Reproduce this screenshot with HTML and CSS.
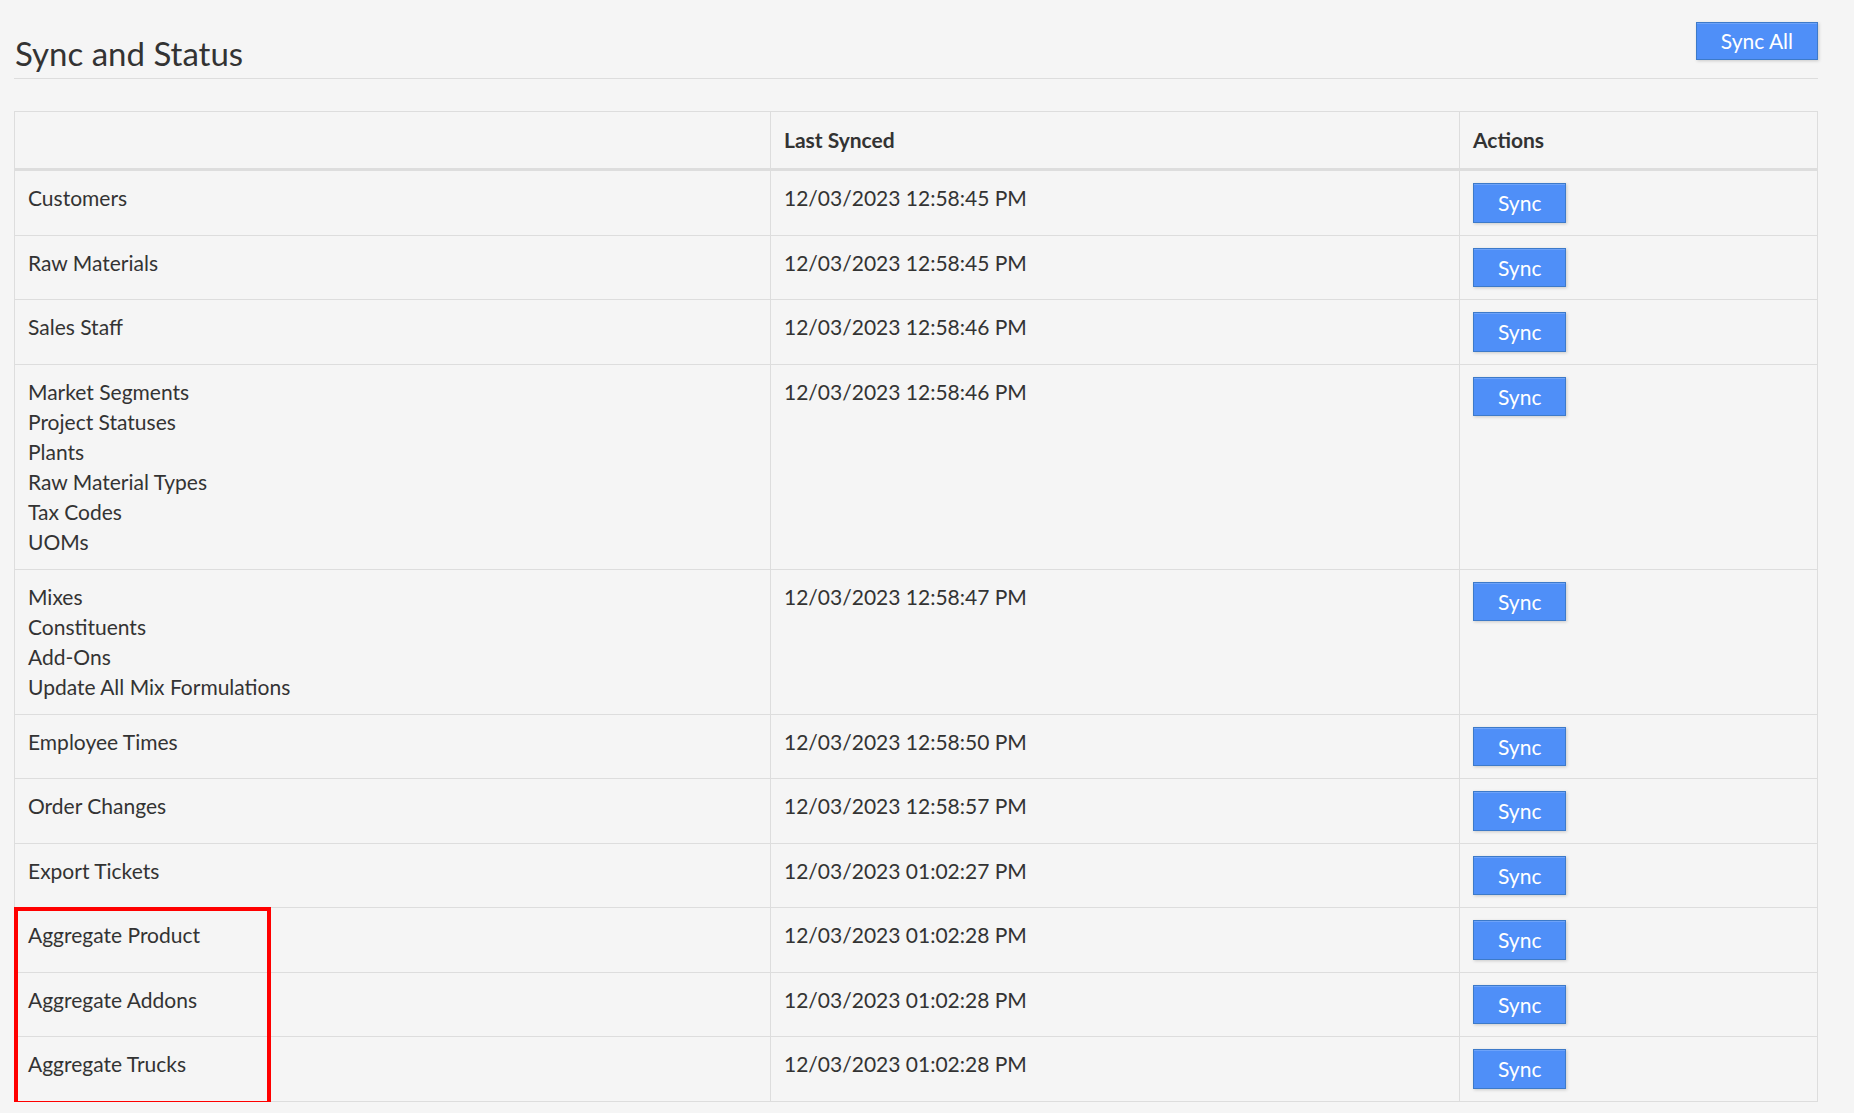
FILE: index.html
```html
<!DOCTYPE html>
<html lang="en">
<head>
<meta charset="utf-8">
<title>Sync and Status</title>
<link rel="stylesheet" href="styles.css">
</head>
<body>
<div class="page">
  <div class="page-header">
    <h1 class="title">Sync and Status</h1>
    <button class="btn">Sync All</button>
  </div>
  <div class="table-wrap">
    <table class="sync-table">
      <colgroup>
        <col class="c-name">
        <col class="c-date">
        <col class="c-act">
      </colgroup>
      <thead>
        <tr><th></th><th>Last Synced</th><th>Actions</th></tr>
      </thead>
      <tbody>
        <tr><td>Customers</td><td>12/03/2023 12:58:45 PM</td><td><button class="btn">Sync</button></td></tr>
        <tr><td>Raw Materials</td><td>12/03/2023 12:58:45 PM</td><td><button class="btn">Sync</button></td></tr>
        <tr><td>Sales Staff</td><td>12/03/2023 12:58:46 PM</td><td><button class="btn">Sync</button></td></tr>
        <tr><td>Market Segments<br>Project Statuses<br>Plants<br>Raw Material Types<br>Tax Codes<br>UOMs</td><td>12/03/2023 12:58:46 PM</td><td><button class="btn">Sync</button></td></tr>
        <tr><td>Mixes<br>Constituents<br>Add-Ons<br>Update All Mix Formulations</td><td>12/03/2023 12:58:47 PM</td><td><button class="btn">Sync</button></td></tr>
        <tr><td>Employee Times</td><td>12/03/2023 12:58:50 PM</td><td><button class="btn">Sync</button></td></tr>
        <tr><td>Order Changes</td><td>12/03/2023 12:58:57 PM</td><td><button class="btn">Sync</button></td></tr>
        <tr><td>Export Tickets</td><td>12/03/2023 01:02:27 PM</td><td><button class="btn">Sync</button></td></tr>
        <tr><td>Aggregate Product</td><td>12/03/2023 01:02:28 PM</td><td><button class="btn">Sync</button></td></tr>
        <tr><td>Aggregate Addons</td><td>12/03/2023 01:02:28 PM</td><td><button class="btn">Sync</button></td></tr>
        <tr><td>Aggregate Trucks</td><td>12/03/2023 01:02:28 PM</td><td><button class="btn">Sync</button></td></tr>
      </tbody>
    </table>
    <div class="highlight"></div>
  </div>
</div>
</body>
</html>
```

FILE: styles.css
```css
html, body {
  margin: 0;
  padding: 0;
  background: #f5f5f5;
}

body {
  font-family: Lato, "Open Sans", "Liberation Sans", sans-serif;
  font-size: 21px;
  line-height: 30px;
  color: #333;
}

.page {
  padding: 0 36px 0 14px;
}

.page-header {
  display: flex;
  justify-content: space-between;
  align-items: flex-start;
  padding-top: 22px;
  padding-bottom: 7px;
  border-bottom: 1px solid #dddddd;
}

.title {
  margin: 13px 0 0 1px;
  font-size: 33px;
  line-height: 36px;
  font-weight: 400;
  color: #333;
}

.btn {
  font-family: Lato, "Open Sans", "Liberation Sans", sans-serif;
  font-size: 21px;
  line-height: 30px;
  color: #ffffff;
  background: #4f8ff8;
  border: 1px solid #3d7ac9;
  border-radius: 0;
  padding: 4px 24px 3.5px;
  margin: 0;
  box-shadow: inset 0 1px 0 rgba(255, 255, 255, 0.18), 1px 1px 3px rgba(0, 0, 0, 0.18);
  cursor: pointer;
}

.page-header .btn {
  padding: 3px 24px 3px;
}

.table-wrap {
  position: relative;
  margin-top: 32px;
}

.sync-table {
  width: 100%;
  border-collapse: collapse;
  table-layout: fixed;
  border: 1px solid #dddddd;
}

.c-name { width: 756px; }
.c-date { width: 689px; }

.sync-table th,
.sync-table td {
  text-align: left;
  vertical-align: top;
  padding: 12px 12px 12px 13px;
  border-left: 1px solid #dddddd;
  border-top: 1px solid #dddddd;
}

.sync-table th {
  font-weight: 700;
  padding: 13px 12px 13px 13px;
  border-bottom: 3px solid #dddddd;
}

.sync-table th:first-child,
.sync-table td:first-child {
  border-left: none;
}

.highlight {
  position: absolute;
  left: 0;
  bottom: -3px;
  width: 257px;
  height: 198px;
  box-sizing: border-box;
  border: 4px solid #ff0000;
  pointer-events: none;
}
```
